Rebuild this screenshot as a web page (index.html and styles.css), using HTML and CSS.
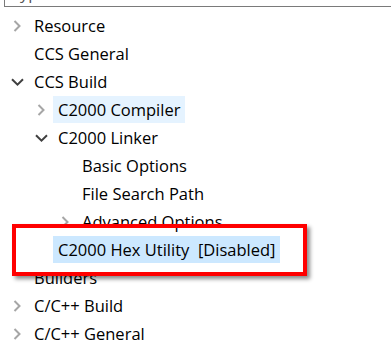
FILE: index.html
```html
<!DOCTYPE html>
<html lang="en">
<head>
    <meta charset="UTF-8">
    <title>Properties</title>
    <link rel="stylesheet" href="styles.css">
</head>
<body>
    <div class="filter"><span class="filter-text">type filter text</span></div>
    <ul class="tree">
        <li class="row"><span class="twisty"><svg width="8" height="12" viewBox="0 0 8 12"><path d="M1.5 1 L6.5 6 L1.5 11" class="chev-closed"/></svg></span><span class="label">Resource</span></li>
        <li class="row"><span class="twisty"></span><span class="label">CCS General</span></li>
        <li class="row"><span class="twisty"><svg width="13" height="8" viewBox="0 0 13 8"><path d="M1 1.2 L6.5 6.6 L12 1.2" class="chev-open"/></svg></span><span class="label">CCS Build</span></li>
        <li class="row level1"><span class="twisty"><svg width="8" height="12" viewBox="0 0 8 12"><path d="M1.5 1 L6.5 6 L1.5 11" class="chev-closed"/></svg></span><span class="label hover">C2000 Compiler</span></li>
        <li class="row level1"><span class="twisty"><svg width="13" height="8" viewBox="0 0 13 8"><path d="M1 1.2 L6.5 6.6 L12 1.2" class="chev-open"/></svg></span><span class="label">C2000 Linker</span></li>
        <li class="row level2"><span class="twisty"></span><span class="label">Basic Options</span></li>
        <li class="row level2"><span class="twisty"></span><span class="label">File Search Path</span></li>
        <li class="row level2"><span class="twisty"><svg width="8" height="12" viewBox="0 0 8 12"><path d="M1.5 1 L6.5 6 L1.5 11" class="chev-closed"/></svg></span><span class="label">Advanced Options</span></li>
        <li class="row level1"><span class="twisty"></span><span class="label selected">C2000 Hex Utility&nbsp; [Disabled]</span></li>
        <li class="row"><span class="twisty"></span><span class="label">Builders</span></li>
        <li class="row"><span class="twisty"><svg width="8" height="12" viewBox="0 0 8 12"><path d="M1.5 1 L6.5 6 L1.5 11" class="chev-closed"/></svg></span><span class="label">C/C++ Build</span></li>
        <li class="row"><span class="twisty"><svg width="8" height="12" viewBox="0 0 8 12"><path d="M1.5 1 L6.5 6 L1.5 11" class="chev-closed"/></svg></span><span class="label">C/C++ General</span></li>
    </ul>
    <div class="callout"></div>
</body>
</html>
```
FILE: styles.css
```css
body {
    margin: 0;
    font-family: "Open Sans", "Noto Sans", sans-serif;
    font-size: 16.5px;
    color: #000;
    background: #fff;
    width: 391px;
    height: 347px;
    overflow: hidden;
    position: relative;
}

.filter {
    margin-left: 4px;
    height: 6px;
    border-left: 1px solid #7a7a7a;
    border-bottom: 1px solid #7a7a7a;
    overflow: hidden;
}

.filter-text {
    display: block;
    margin-top: -17px;
    padding-left: 9px;
    line-height: 20px;
    color: #555;
}

.tree {
    list-style: none;
    margin: 5px 0 0 0;
    padding: 0 0 0 5px;
}

.row {
    display: flex;
    align-items: flex-start;
    height: 28px;
}

.level1 {
    padding-left: 24px;
}

.level2 {
    padding-left: 48px;
}

.twisty {
    width: 24px;
    height: 27px;
    display: flex;
    align-items: center;
    justify-content: center;
}

.chev-closed {
    fill: none;
    stroke: #a6a6a6;
    stroke-width: 2;
}

.chev-open {
    fill: none;
    stroke: #404040;
    stroke-width: 2;
}

.label {
    height: 27px;
    line-height: 28px;
    padding: 0 5px;
    white-space: nowrap;
}

.hover {
    background: #e5f3ff;
}

.selected {
    background: #cce8ff;
}

.callout {
    position: absolute;
    left: 12px;
    top: 224px;
    width: 287px;
    height: 44px;
    border: 4px solid #ff0000;
    box-shadow: 3px 3px 4px rgba(0, 0, 0, 0.45);
}
```
